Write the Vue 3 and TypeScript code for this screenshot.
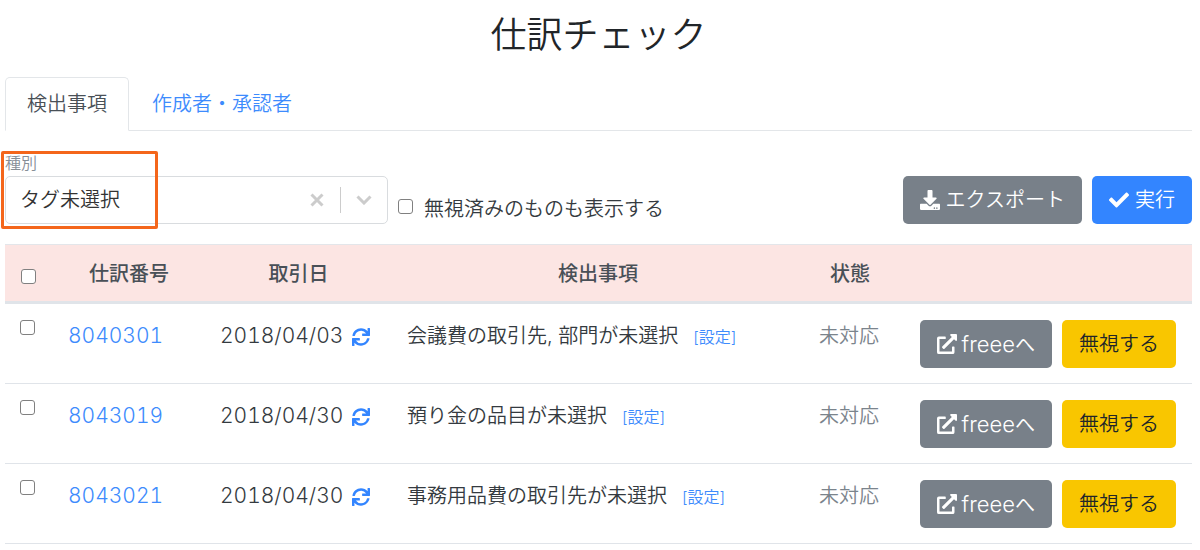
<script setup lang="ts">
import { computed, ref } from 'vue'

interface Entry {
  id: string
  date: string
  finding: string
  status: string
}

const entries: Entry[] = [
  { id: '8040301', date: '2018/04/03', finding: '会議費の取引先, 部門が未選択', status: '未対応' },
  { id: '8043019', date: '2018/04/30', finding: '預り金の品目が未選択', status: '未対応' },
  { id: '8043021', date: '2018/04/30', finding: '事務用品費の取引先が未選択', status: '未対応' },
]

const kind = ref('タグ未選択')
const showIgnored = ref(false)
const selected = ref<string[]>([])

const allSelected = computed({
  get: () => selected.value.length === entries.length,
  set: (on: boolean) => {
    selected.value = on ? entries.map((e) => e.id) : []
  },
})
</script>

<template>
  <main class="page">
    <h1 class="title">仕訳チェック</h1>

    <nav class="tabs">
      <a class="tab active" href="#findings" aria-current="page">検出事項</a>
      <a class="tab" href="#authors">作成者・承認者</a>
    </nav>

    <section class="toolbar">
      <div class="field">
        <label class="field-label" for="kind">種別</label>
        <div class="picker">
          <select id="kind" v-model="kind" class="picker-select">
            <option value=""></option>
            <option>タグ未選択</option>
          </select>
          <button class="clear" type="button" aria-label="クリア" @click="kind = ''">
            <svg viewBox="0 0 14 14" width="14" height="14"><path d="M1.5 1.5l11 11M12.5 1.5l-11 11" /></svg>
          </button>
          <span class="divider"></span>
          <svg class="chevron" viewBox="0 0 16 10" width="16" height="10"><path d="M1.5 1.5L8 8l6.500-6.500" /></svg>
        </div>
        <div class="highlight"></div>
      </div>

      <label class="ignored"><input v-model="showIgnored" class="check" type="checkbox" />無視済みのものも表示する</label>

      <div class="actions">
        <button class="btn secondary" type="button">
          <svg class="icon" viewBox="0 0 512 512"><path d="M216 0h80c13.300 0 24 10.700 24 24v168h87.700c17.800 0 26.700 21.500 14.100 34.100L269.700 378.300c-7.500 7.500-19.800 7.500-27.300 0L90.100 226.100c-12.600-12.600-3.700-34.100 14.100-34.100H192V24c0-13.300 10.700-24 24-24zm296 376v112c0 13.300-10.700 24-24 24H24c-13.300 0-24-10.700-24-24V376c0-13.300 10.700-24 24-24h146.700l49 49c20.100 20.100 52.500 20.100 72.600 0l49-49H488c13.300 0 24 10.700 24 24zm-124 88c0-11-9-20-20-20s-20 9-20 20 9 20 20 20 20-9 20-20zm64 0c0-11-9-20-20-20s-20 9-20 20 9 20 20 20 20-9 20-20z" /></svg>
          エクスポート
        </button>
        <button class="btn primary" type="button">
          <svg class="icon" viewBox="0 0 512 512"><path d="M173.898 439.404l-166.400-166.400c-9.997-9.997-9.997-26.206 0-36.204l36.203-36.204c9.997-9.998 26.207-9.998 36.204 0L192 312.690 432.095 72.596c9.997-9.997 26.207-9.997 36.204 0l36.203 36.204c9.997 9.997 9.997 26.206 0 36.204l-294.400 294.401c-9.998 9.997-26.207 9.997-36.204-.001z" /></svg>
          実行
        </button>
      </div>
    </section>

    <table class="entries">
      <colgroup>
        <col class="col-check" />
        <col class="col-id" />
        <col class="col-date" />
        <col />
        <col class="col-status" />
        <col class="col-actions" />
      </colgroup>
      <thead>
        <tr>
          <th><input v-model="allSelected" class="check" type="checkbox" aria-label="すべて選択" /></th>
          <th>仕訳番号</th>
          <th>取引日</th>
          <th>検出事項</th>
          <th>状態</th>
          <th></th>
        </tr>
      </thead>
      <tbody>
        <tr v-for="entry in entries" :key="entry.id">
          <td><input v-model="selected" class="check" type="checkbox" :value="entry.id" :aria-label="entry.id" /></td>
          <td><a class="number" :href="'#' + entry.id">{{ entry.id }}</a></td>
          <td>
            <div class="date">
              <span class="number">{{ entry.date }}</span>
              <button class="sync" type="button" aria-label="更新">
                <svg class="icon" viewBox="0 0 512 512"><path d="M440.650 12.570l4 82.770A247.160 247.160 0 0 0 255.830 8C134.730 8 33.910 94.920 12.290 209.820A12 12 0 0 0 24.090 224h49.050a12 12 0 0 0 11.670-9.260 175.910 175.910 0 0 1 317-56.940l-101.460-4.860a12 12 0 0 0-12.570 12v47.410a12 12 0 0 0 12 12H500a12 12 0 0 0 12-12V12a12 12 0 0 0-12-12h-47.370a12 12 0 0 0-11.980 12.570zM255.830 432a175.610 175.610 0 0 1-146-77.800l101.800 4.870a12 12 0 0 0 12.570-12v-47.400a12 12 0 0 0-12-12H12a12 12 0 0 0-12 12V500a12 12 0 0 0 12 12h47.350a12 12 0 0 0 12-12.600l-4.150-82.570A247.170 247.170 0 0 0 255.830 504c121.110 0 221.930-86.920 243.550-201.820a12 12 0 0 0-11.800-14.180h-49.050a12 12 0 0 0-11.670 9.260A175.860 175.860 0 0 1 255.830 432z" /></svg>
              </button>
            </div>
          </td>
          <td>{{ entry.finding }}<a class="config" href="#config">[設定]</a></td>
          <td class="status">{{ entry.status }}</td>
          <td>
            <div class="row-actions">
              <button class="btn secondary freee" type="button">
                <svg class="icon" viewBox="0 0 512 512"><path d="M432,320H400a16,16,0,0,0-16,16V448H64V128H208a16,16,0,0,0,16-16V80a16,16,0,0,0-16-16H48A48,48,0,0,0,0,112V464a48,48,0,0,0,48,48H400a48,48,0,0,0,48-48V336A16,16,0,0,0,432,320ZM488,0h-128c-21.370,0-32.050,25.910-17,41l35.730,35.730L135,320.370a24,24,0,0,0,0,34L157.670,377a24,24,0,0,0,34,0L435.280,133.320,471,169c15,15,41,4.500,41-17V24A24,24,0,0,0,488,0Z" /></svg>
                <span><span class="latin">freee</span>へ</span>
              </button>
              <button class="btn warning" type="button">無視する</button>
            </div>
          </td>
        </tr>
      </tbody>
    </table>
  </main>
</template>

<style>
body {
  margin: 0;
  background: #fff;
}
</style>

<style scoped>
.page {
  padding: 10px 8px 0 5px;
  color: #343a40;
  font-family: Inter, "Noto Sans CJK JP", sans-serif;
  font-size: 20px;
  font-weight: 350;
  line-height: 30px;
}
.title {
  margin: 0;
  color: #212529;
  font-size: 36px;
  font-weight: 350;
  line-height: 50px;
  text-align: center;
}
a {
  color: #3d8bfd;
  text-decoration: none;
}
button,
select {
  margin: 0;
  font: inherit;
}
.tabs {
  display: flex;
  gap: 1px;
  margin-top: 17px;
  border-bottom: 1px solid #e3e6e9;
}
.tab {
  margin-bottom: -1px;
  padding: 11px 21px;
  border: 1px solid transparent;
  border-radius: 5px 5px 0 0;
}
.tab.active {
  border-color: #e3e6e9;
  border-bottom-color: #fff;
  background: #fff;
  color: #495057;
}
.toolbar {
  display: flex;
  align-items: flex-end;
  margin-top: 21px;
}
.field {
  position: relative;
  flex: 0 0 383px;
}
.field-label {
  display: block;
  padding-bottom: 2px;
  color: #868e96;
  font-size: 16px;
  line-height: 22px;
}
.picker {
  display: flex;
  align-items: center;
  box-sizing: border-box;
  height: 48px;
  padding-right: 15px;
  border: 1px solid #d9dcdf;
  border-radius: 5px;
}
.picker-select {
  flex: 1;
  min-width: 0;
  height: 100%;
  padding: 0 14px;
  border: 0;
  background: none;
  color: #333;
  appearance: none;
}
.picker path {
  fill: none;
  stroke: #ccc;
  stroke-width: 3;
}
.clear {
  display: flex;
  padding: 0;
  border: 0;
  background: none;
}
.divider {
  width: 1px;
  height: 26px;
  margin: 0 15px 0 16px;
  background: #ccc;
}
.highlight {
  position: absolute;
  top: -1px;
  left: -4px;
  box-sizing: border-box;
  width: 157px;
  height: 78px;
  border: 3px solid #f4661b;
  border-radius: 2px;
  pointer-events: none;
}
.check {
  flex: none;
  box-sizing: border-box;
  width: 15px;
  height: 15px;
  margin: 0;
  border: 1px solid #808080;
  border-radius: 3px;
  background: #fff;
  appearance: none;
}
.check:checked {
  background: #3385ff;
}
.ignored {
  display: flex;
  gap: 11px;
  margin-left: 10px;
}
.ignored .check {
  margin-top: 5px;
}
.actions,
.row-actions {
  display: flex;
  justify-content: flex-end;
  gap: 10px;
}
.actions {
  margin-left: auto;
}
.btn {
  display: flex;
  align-items: center;
  gap: 6px;
  height: 48px;
  padding: 0 17px;
  border: 0;
  border-radius: 5px;
  color: #fff;
  line-height: 30px;
  white-space: nowrap;
}
.freee {
  gap: 5px;
}
.secondary {
  background: #788089;
}
.primary {
  background: #3385ff;
}
.warning {
  background: #f9c600;
  color: #212529;
}
.icon {
  width: 20px;
  height: 20px;
  fill: currentColor;
}
.entries {
  width: 100%;
  margin-top: 20px;
  border-collapse: separate;
  border-spacing: 0;
  table-layout: fixed;
}
.col-check {
  width: 48px;
}
.col-id {
  width: 152px;
}
.col-date {
  width: 187px;
}
.col-status {
  width: 92px;
}
.col-actions {
  width: 296px;
}
th {
  padding: 14px 15px 12px;
  border-top: 1px solid #e3e6ea;
  border-bottom: 3px solid #e0e4e9;
  background: #fce5e3;
  color: #495057;
  font-weight: 500;
}
td {
  padding: 16px 16px 15px 15px;
  border-bottom: 1px solid #e0e4e9;
  line-height: 32px;
  vertical-align: top;
}
td:nth-child(3) {
  padding-right: 0;
}
th .check,
td .check {
  display: block;
}
th .check {
  margin: 5px 0 0 1px;
}
.number {
  font-size: 21px;
  font-variant-numeric: tabular-nums;
}
.latin {
  font-size: 22px;
}
.date {
  display: flex;
  align-items: center;
  gap: 9px;
}
.sync {
  display: flex;
  padding: 2px 0 0;
  border: 0;
  background: none;
  color: #3385ff;
}
.sync .icon {
  width: 18px;
  height: 18px;
}
.config {
  margin-left: 15px;
  font-size: 16px;
}
.status {
  color: #7b848c;
  white-space: nowrap;
}
</style>
